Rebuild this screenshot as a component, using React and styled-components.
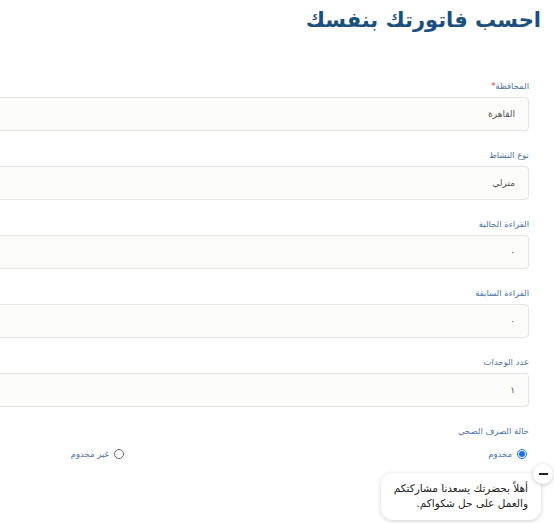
import React, { useState } from "react";
import styled, { createGlobalStyle } from "styled-components";

const Global = createGlobalStyle`
  html, body { margin: 0; padding: 0; background: #ffffff; overflow: hidden; }
  body { font-family: "DejaVu Sans", "Noto Sans", sans-serif; direction: rtl; }
`;

const Page = styled.div`
  direction: rtl;
  width: 554px;
  height: 523px;
  padding-right: 13px;
  box-sizing: border-box;
  position: relative;
`;

const Title = styled.h1`
  margin: 0;
  padding-top: 4px;
  font-size: 21px;
  line-height: 32px;
  font-weight: 700;
  color: #1b4f7d;
`;

const Form = styled.form`
  margin-top: 44px;
  padding-right: 12px;
  width: 900px;
  box-sizing: border-box;
`;

const Field = styled.div`
  display: flex;
  flex-direction: column;
  margin-bottom: 18px;
`;

const Label = styled.label`
  font-size: 8.5px;
  line-height: 12px;
  color: #4a74a8;
  margin-bottom: 5px;
`;

const Star = styled.span`
  color: #e0303a;
`;

const Input = styled.div`
  height: 34px;
  box-sizing: border-box;
  border: 1px solid #e4e6e2;
  border-radius: 4px;
  background: #fcfdfb;
  display: flex;
  align-items: center;
  padding-right: 13px;
  font-size: 9px;
  color: #555;
`;

const RadioRow = styled.div`
  display: grid;
  grid-template-columns: 403px 403px;
  margin-top: 5px;
`;

const RadioOption = styled.label`
  display: flex;
  align-items: center;
  gap: 5px;
  font-size: 8.5px;
  color: #4a74a8;
  height: 14px;
`;

const RadioDot = styled.span`
  width: 10px;
  height: 10px;
  box-sizing: border-box;
  border-radius: 50%;
  border: 1px solid ${(p) => (p.$checked ? "#1a73e8" : "#6b6b6b")};
  background: #fff;
  display: flex;
  align-items: center;
  justify-content: center;
  margin-right: 2px;
  &::after {
    content: "";
    width: 6px;
    height: 6px;
    border-radius: 50%;
    background: ${(p) => (p.$checked ? "#1a73e8" : "transparent")};
  }
`;

const Bubble = styled.div`
  position: absolute;
  right: 13px;
  bottom: 3px;
  width: 160px;
  box-sizing: border-box;
  padding: 8px 13px 9px 6px;
  background: #fff;
  border-radius: 12px;
  box-shadow: 0 1px 5px rgba(0, 0, 0, 0.18);
  font-size: 10.5px;
  line-height: 15px;
  color: #222;
  white-space: nowrap;
`;

const CloseBtn = styled.button`
  position: absolute;
  top: -9px;
  right: -12px;
  width: 20px;
  height: 20px;
  border-radius: 50%;
  border: none;
  background: #fff;
  box-shadow: 0 1px 4px rgba(0, 0, 0, 0.22);
  padding: 0;
  display: flex;
  align-items: center;
  justify-content: center;
  &::after {
    content: "";
    width: 9px;
    height: 2px;
    background: #222;
  }
`;

const fields = [
  { label: "المحافظة", required: true, value: "القاهرة" },
  { label: "نوع النشاط", value: "منزلي" },
  { label: "القراءة الحالية", value: "٠" },
  { label: "القراءة السابقة", value: "٠" },
  { label: "عدد الوحدات", value: "١" },
];

export default function App() {
  const [served, setServed] = useState(true);
  return (
    <Page>
      <Global />
      <Title>احسب فاتورتك بنفسك</Title>
      <Form>
        {fields.map((f) => (
          <Field key={f.label}>
            <Label>
              {f.label}
              {f.required && <Star>*</Star>}
            </Label>
            <Input>{f.value}</Input>
          </Field>
        ))}
        <Field>
          <Label>حالة الصرف الصحي</Label>
          <RadioRow>
            <RadioOption onClick={() => setServed(true)}>
              <RadioDot $checked={served} />
              مخدوم
            </RadioOption>
            <RadioOption onClick={() => setServed(false)}>
              <RadioDot $checked={!served} />
              غير مخدوم
            </RadioOption>
          </RadioRow>
        </Field>
      </Form>
      <Bubble>
        <CloseBtn type="button" aria-label="close" />
        أهلاً بحضرتك يسعدنا مشاركتكم
        <br />
        والعمل على حل شكواكم.
      </Bubble>
    </Page>
  );
}
